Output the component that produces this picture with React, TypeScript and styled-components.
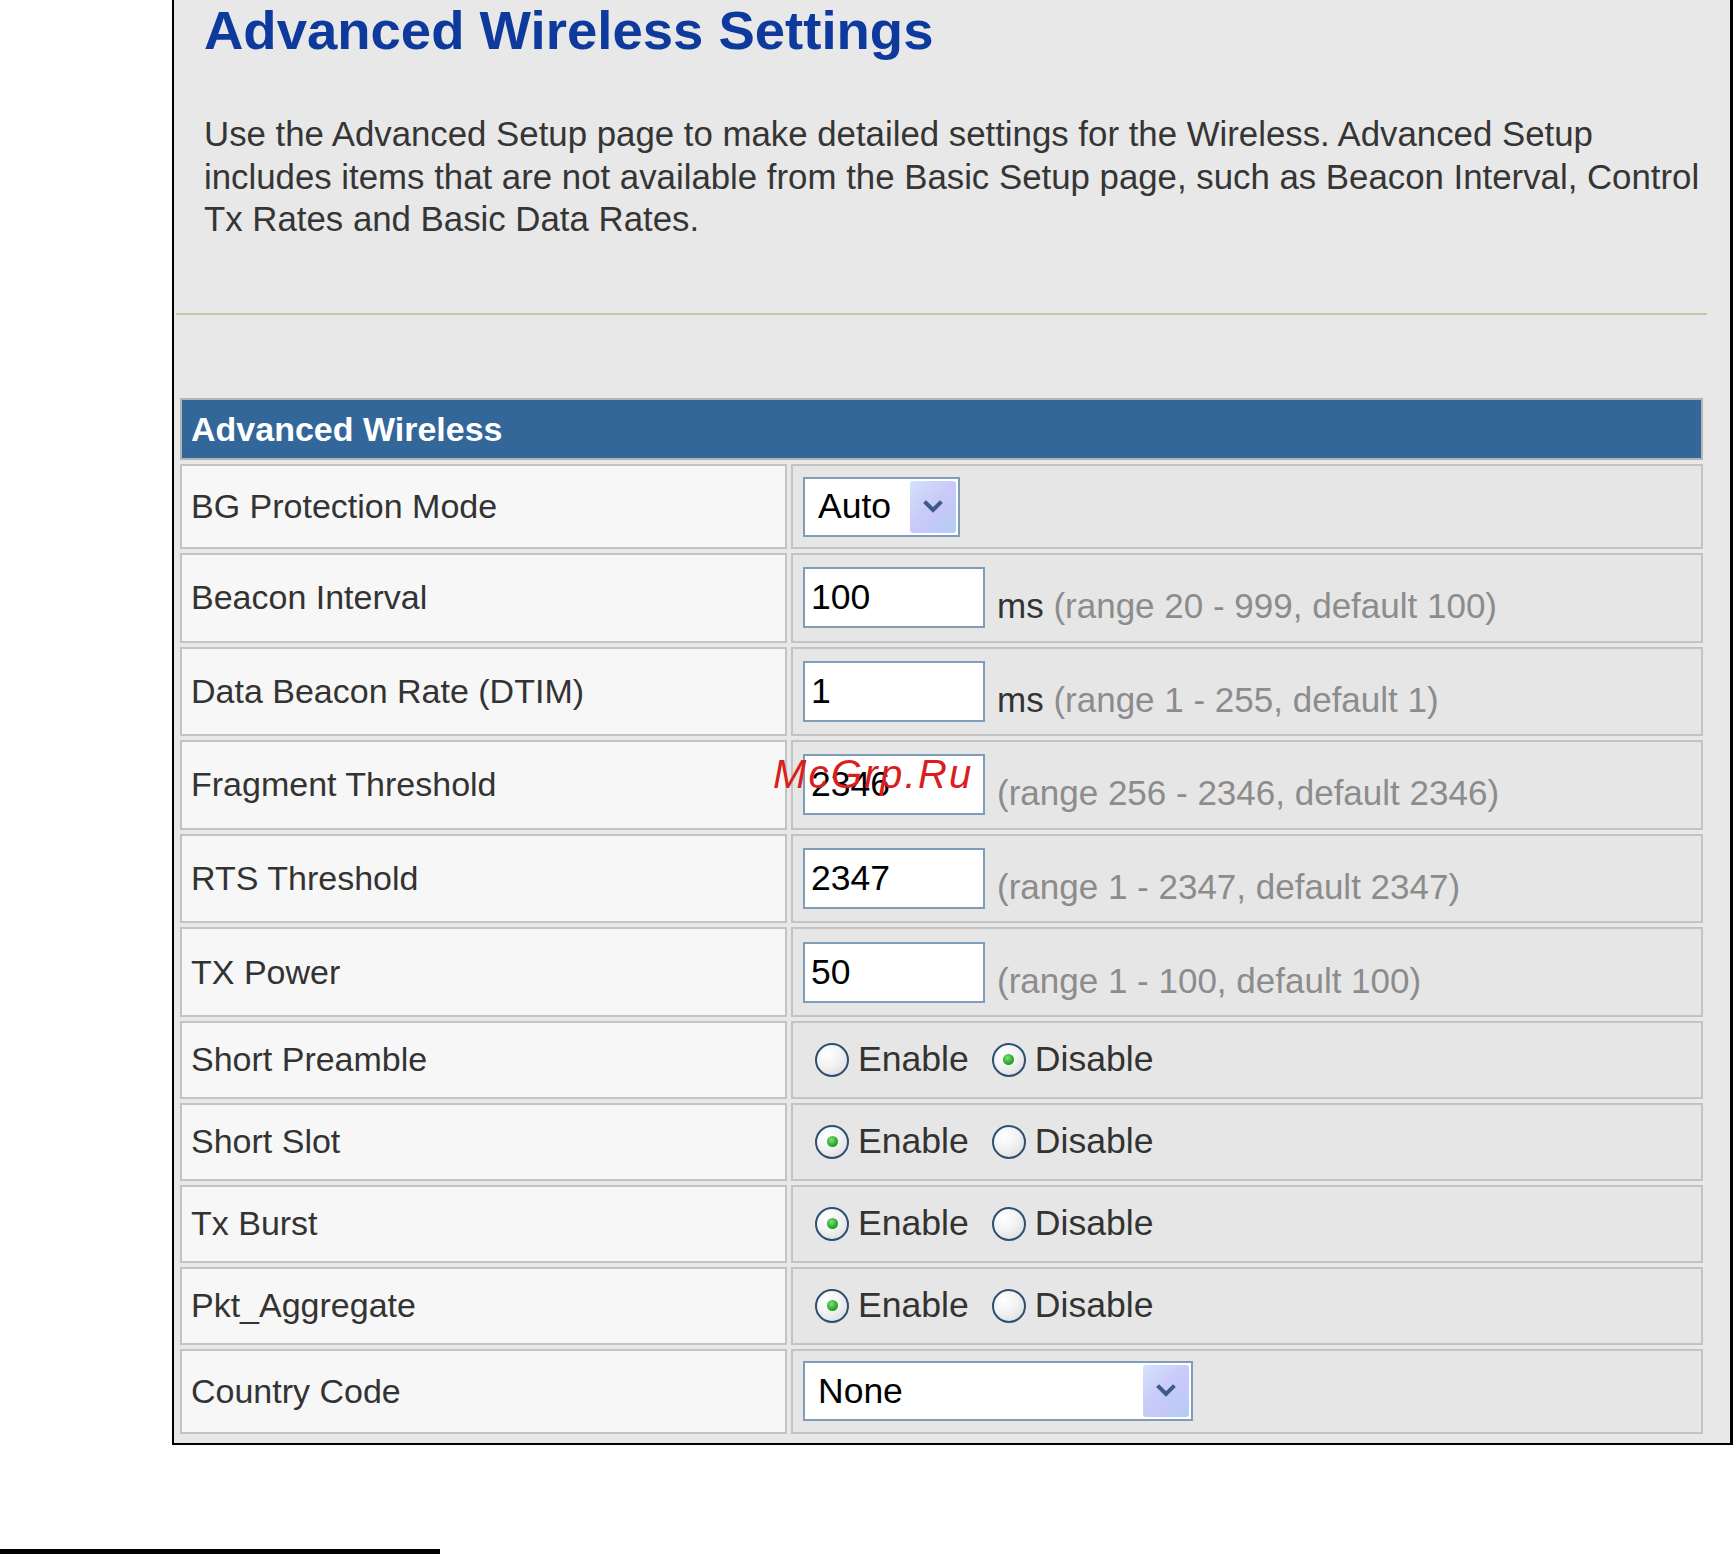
import React from "react";
import styled, { createGlobalStyle } from "styled-components";

const GlobalStyle = createGlobalStyle`
  html, body { margin: 0; padding: 0; background: #ffffff; }
  body { font-family: "Liberation Sans", Arial, sans-serif; }
`;

const Page = styled.div`
  position: relative;
  width: 1733px;
  height: 1554px;
  display: flex;
  flex-direction: column;
  overflow: hidden;
  background: #ffffff;
`;

const Panel = styled.section`
  box-sizing: border-box;
  margin-left: 172px;
  width: 1561px;
  height: 1445px;
  background: #e8e8e8;
  border-left: 2px solid #000;
  border-right: 3px solid #000;
  border-bottom: 2px solid #000;
  display: flex;
  flex-direction: column;
`;

const Intro = styled.div`
  padding-left: 30px;
`;

const Title = styled.h1`
  margin: 0;
  font-size: 54.5px;
  line-height: 61px;
  font-weight: bold;
  color: #0d3a9c;
  white-space: nowrap;
`;

const Lead = styled.p`
  margin: 52px 0 0;
  font-size: 34.8px;
  line-height: 42.5px;
  color: #353535;
  white-space: nowrap;
`;

const Divider = styled.hr`
  margin: 72.5px 0 0 2px;
  width: 1531px;
  height: 2px;
  border: 0;
  background: #c9c4a3;
`;

const Table = styled.div`
  margin: 83px 0 0 6px;
  width: 1523px;
  display: grid;
  grid-template-columns: 607px 912px;
  column-gap: 4px;
  row-gap: 4px;
`;

const HeaderCell = styled.div`
  grid-column: 1 / -1;
  box-sizing: border-box;
  height: 62px;
  display: flex;
  align-items: center;
  padding-left: 9px;
  background: #336699;
  border: 2px solid #b4b4b4;
  color: #ffffff;
  font-weight: bold;
  font-size: 34px;
`;

const LabelCell = styled.div<{ $h: number }>`
  box-sizing: border-box;
  height: ${(p) => p.$h}px;
  display: flex;
  align-items: center;
  padding-left: 9px;
  background: #f7f7f7;
  border: 2px solid #c3c3c3;
  color: #333333;
  font-size: 34px;
  white-space: nowrap;
`;

const ValueCell = styled.div<{ $h: number }>`
  box-sizing: border-box;
  height: ${(p) => p.$h}px;
  display: flex;
  align-items: center;
  padding-left: 10px;
  background: #e6e6e6;
  border: 2px solid #c3c3c3;
  color: #333333;
  font-size: 35px;
  white-space: nowrap;
`;

const Field = styled.div`
  display: flex;
  align-items: flex-end;
`;

const TextBox = styled.input`
  box-sizing: border-box;
  width: 182px;
  height: 61px;
  margin: 0;
  padding: 0 6px;
  border: 2px solid #7f9db9;
  background: #ffffff;
  color: #000000;
  font-family: "Liberation Sans", Arial, sans-serif;
  font-size: 35.5px;
  outline: none;
`;

const Suffix = styled.span`
  margin: 0 0 5px 12px;
  font-size: 35px;
  line-height: 35px;
  color: #333333;
`;

const Hint = styled.span`
  color: #8c8c8c;
`;

const SelectBox = styled.div<{ $w: number }>`
  box-sizing: border-box;
  width: ${(p) => p.$w}px;
  height: 60px;
  display: flex;
  align-items: center;
  justify-content: space-between;
  padding-left: 13px;
  background: #ffffff;
  border: 2px solid #7f9db9;
  color: #000000;
  font-size: 35.5px;
`;

const ArrowButton = styled.span`
  box-sizing: border-box;
  width: 46px;
  height: 52px;
  margin-right: 2px;
  border-radius: 3px;
  display: flex;
  align-items: center;
  justify-content: center;
  background: linear-gradient(135deg, #d3e2fd 0%, #c9cbf8 45%, #c6c9f7 60%, #b3cdf3 100%);
`;

const RadioGroup = styled.div`
  display: flex;
  align-items: center;
  padding-left: 12px;
`;

const RadioOption = styled.label`
  display: flex;
  align-items: center;
  gap: 9px;
  margin-right: 23px;
  font-size: 35.6px;
  color: #333333;
`;

const RadioCircle = styled.span<{ $on: boolean }>`
  box-sizing: border-box;
  position: relative;
  width: 34px;
  height: 34px;
  border-radius: 50%;
  border: 2px solid #2c4f72;
  background: radial-gradient(circle at 35% 30%, #ffffff 0%, #f2f2f2 45%, #d6d6d6 100%);
  &::after {
    content: "";
    display: ${(p) => (p.$on ? "block" : "none")};
    position: absolute;
    left: 50%;
    top: 50%;
    width: 11px;
    height: 11px;
    margin: -5.5px 0 0 -5.5px;
    border-radius: 50%;
    background: radial-gradient(circle at 40% 35%, #7ee07e 0%, #26a626 60%, #128a12 100%);
  }
`;

const Watermark = styled.div`
  position: absolute;
  left: 773px;
  top: 754px;
  font-size: 40px;
  line-height: 40px;
  font-style: italic;
  letter-spacing: 2.3px;
  color: #d81e1e;
  white-space: nowrap;
  pointer-events: none;
`;

const FootRule = styled.div`
  margin-top: 104px;
  width: 440px;
  height: 5px;
  background: #000000;
`;

const Chevron = () => (
  <svg width="20" height="14" viewBox="0 0 20 14">
    <path d="M3 3 L10 10 L17 3" fill="none" stroke="#3d5a88" strokeWidth="4" strokeLinecap="square" />
  </svg>
);

type Row =
  | { kind: "select"; label: string; value: string; w: number; h: number }
  | { kind: "text"; label: string; value: string; unit?: string; hint: string; h: number }
  | { kind: "radio"; label: string; enabled: boolean; h: number };

const rows: Row[] = [
  { kind: "select", label: "BG Protection Mode", value: "Auto", w: 157, h: 85 },
  { kind: "text", label: "Beacon Interval", value: "100", unit: "ms", hint: "(range 20 - 999, default 100)", h: 89.6 },
  { kind: "text", label: "Data Beacon Rate (DTIM)", value: "1", unit: "ms", hint: "(range 1 - 255, default 1)", h: 89.6 },
  { kind: "text", label: "Fragment Threshold", value: "2346", hint: "(range 256 - 2346, default 2346)", h: 89.6 },
  { kind: "text", label: "RTS Threshold", value: "2347", hint: "(range 1 - 2347, default 2347)", h: 89.6 },
  { kind: "text", label: "TX Power", value: "50", hint: "(range 1 - 100, default 100)", h: 89.6 },
  { kind: "radio", label: "Short Preamble", enabled: false, h: 78 },
  { kind: "radio", label: "Short Slot", enabled: true, h: 78 },
  { kind: "radio", label: "Tx Burst", enabled: true, h: 78 },
  { kind: "radio", label: "Pkt_Aggregate", enabled: true, h: 78 },
  { kind: "select", label: "Country Code", value: "None", w: 390, h: 85 },
];

const renderValue = (r: Row) => {
  if (r.kind === "select") {
    return (
      <SelectBox $w={r.w}>
        <span>{r.value}</span>
        <ArrowButton>
          <Chevron />
        </ArrowButton>
      </SelectBox>
    );
  }
  if (r.kind === "text") {
    return (
      <Field>
        <TextBox type="text" defaultValue={r.value} readOnly />
        <Suffix>
          {r.unit ? `${r.unit} ` : ""}
          <Hint>{r.hint}</Hint>
        </Suffix>
      </Field>
    );
  }
  return (
    <RadioGroup>
      <RadioOption>
        <RadioCircle $on={r.enabled} />
        Enable
      </RadioOption>
      <RadioOption>
        <RadioCircle $on={!r.enabled} />
        Disable
      </RadioOption>
    </RadioGroup>
  );
};

export default function App() {
  return (
    <Page>
      <GlobalStyle />
      <Panel>
        <Intro>
          <Title>Advanced Wireless Settings</Title>
          <Lead>
            Use the Advanced Setup page to make detailed settings for the Wireless. Advanced Setup
            <br />
            includes items that are not available from the Basic Setup page, such as Beacon Interval, Control
            <br />
            Tx Rates and Basic Data Rates.
          </Lead>
        </Intro>
        <Divider />
        <Table>
          <HeaderCell>Advanced Wireless</HeaderCell>
          {rows.map((r) => (
            <React.Fragment key={r.label}>
              <LabelCell $h={r.h}>{r.label}</LabelCell>
              <ValueCell $h={r.h}>{renderValue(r)}</ValueCell>
            </React.Fragment>
          ))}
        </Table>
      </Panel>
      <FootRule />
      <Watermark>McGrp.Ru</Watermark>
    </Page>
  );
}
